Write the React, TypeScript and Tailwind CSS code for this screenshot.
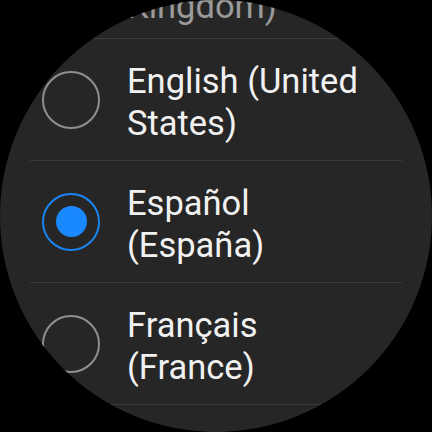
import React from "react";

type Item = { lines: [string, string]; selected?: boolean; faded?: boolean };

const items: Item[] = [
  { lines: ["English (United", "Kingdom)"], faded: true },
  { lines: ["English (United", "States)"] },
  { lines: ["Español", "(España)"], selected: true },
  { lines: ["Français", "(France)"] },
];

function Radio({ selected }: { selected?: boolean }) {
  if (selected) {
    return (
      <div className="w-[58px] h-[58px] shrink-0 rounded-full border-2 border-[#1a84f0] flex items-center justify-center">
        <div className="w-[31px] h-[31px] rounded-full bg-[#1a88ff]" />
      </div>
    );
  }
  return <div className="w-[58px] h-[58px] shrink-0 rounded-full border-2 border-[#8f8f8f]" />;
}

export default function App() {
  return (
    <div className="w-[432px] h-[432px] bg-black" style={{ fontFamily: "Roboto, 'Noto Sans', sans-serif" }}>
      <div className="w-[432px] h-[432px] rounded-full overflow-hidden bg-[#262626]">
        <div className="mt-[-83px]">
          {items.map((it, i) => (
            <div key={i}>
              <div className="h-[121px] flex items-center pl-[42px] gap-[27px]">
                <Radio selected={it.selected} />
                <div
                  className={
                    "text-[34.5px] leading-[42px] whitespace-nowrap " +
                    (it.faded ? "pt-[14px] text-[#9a9a9a]" : "pt-[5px] text-[#f1f1f1]")
                  }
                >
                  <div>{it.lines[0]}</div>
                  <div>{it.lines[1]}</div>
                </div>
              </div>
              <div className="mx-[30px] h-px bg-[#3a3a3a]" />
            </div>
          ))}
        </div>
      </div>
    </div>
  );
}
